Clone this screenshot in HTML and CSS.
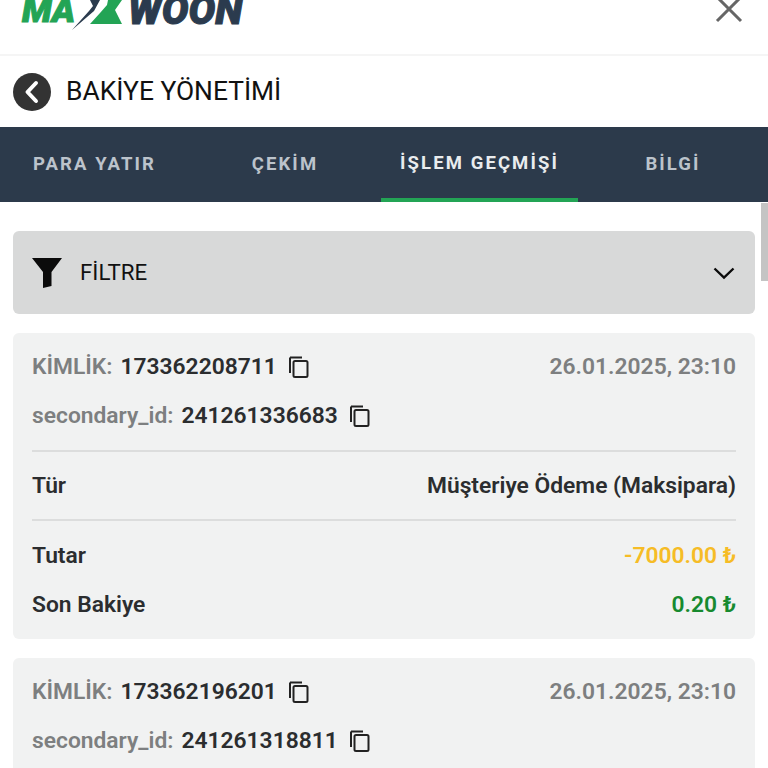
FILE: index.html
```html
<!DOCTYPE html>
<html lang="tr">
<head>
<meta charset="utf-8">
<title>Bakiye Yönetimi</title>
<link rel="stylesheet" href="styles.css">
</head>
<body>
<header class="topbar">
  <div class="logo">
    <span class="logo-ma">MA</span>
    <svg class="logo-x" viewBox="0 0 56 32" width="56" height="32"><polygon fill="#23a455" points="36,0 50,0 43,10 50,24 18,24 28,13 35,5"/><polygon fill="#2b3b4e" points="18,0 28,0 22,11 0,30 17,11 21,6"/></svg>
    <span class="logo-woon">WOON</span>
  </div>
  <svg class="close" viewBox="0 0 28 28" width="28" height="28"><path d="M2 -3 L26 21 M26 -3 L2 21" fill="none" stroke="#666" stroke-width="3"/></svg>
</header>
<div class="title-row">
  <span class="back"><svg viewBox="0 0 38 38" width="38" height="38"><path d="M23 10 L14.500 19 L23 28" fill="none" stroke="#fff" stroke-width="4" stroke-linecap="round" stroke-linejoin="round"/></svg></span>
  <h1 class="title">BAKİYE YÖNETİMİ</h1>
</div>
<nav class="tabs">
  <a class="tab">PARA YATIR</a>
  <a class="tab">ÇEKİM</a>
  <a class="tab tab-active">İŞLEM GEÇMİŞİ</a>
  <a class="tab">BİLGİ</a>
</nav>
<div class="scrollbar"></div>
<main class="content">
  <section class="filter">
    <svg class="funnel" viewBox="0 0 30 30" width="30" height="30"><path d="M0 0 H30 L19.500 14 V28 L11 30 V14 Z" fill="#0b0b0b"/></svg>
    <span class="filter-label">FİLTRE</span>
    <svg class="chevron" viewBox="0 0 24 14" width="24" height="14"><path d="M2.500 2.500 L12 11.500 L21.500 2.500" fill="none" stroke="#0b0b0b" stroke-width="2.400"/></svg>
  </section>

  <article class="card">
    <div class="row">
      <span class="id"><span class="muted">KİMLİK:</span> <b class="val">173362208711</b><svg class="copy" viewBox="0 0 24 24" width="24" height="24"><path d="M3 2.500 H15 M3 2.500 V18" fill="none" stroke="#222" stroke-width="2"/><rect x="6.500" y="6" width="14" height="16" rx="1.500" fill="none" stroke="#222" stroke-width="2"/></svg></span>
      <span class="muted">26.01.2025, 23:10</span>
    </div>
    <div class="row">
      <span class="id"><span class="muted">secondary_id:</span> <b class="val">241261336683</b><svg class="copy" viewBox="0 0 24 24" width="24" height="24"><path d="M3 2.500 H15 M3 2.500 V18" fill="none" stroke="#222" stroke-width="2"/><rect x="6.500" y="6" width="14" height="16" rx="1.500" fill="none" stroke="#222" stroke-width="2"/></svg></span>
    </div>
    <div class="type-row">
      <span class="val">Tür</span>
      <span class="val">Müşteriye Ödeme (Maksipara)</span>
    </div>
    <div class="row">
      <span class="val">Tutar</span>
      <span class="amount-out">-7000.00 ₺</span>
    </div>
    <div class="row">
      <span class="val">Son Bakiye</span>
      <span class="amount-in">0.20 ₺</span>
    </div>
  </article>

  <article class="card">
    <div class="row">
      <span class="id"><span class="muted">KİMLİK:</span> <b class="val">173362196201</b><svg class="copy" viewBox="0 0 24 24" width="24" height="24"><path d="M3 2.500 H15 M3 2.500 V18" fill="none" stroke="#222" stroke-width="2"/><rect x="6.500" y="6" width="14" height="16" rx="1.500" fill="none" stroke="#222" stroke-width="2"/></svg></span>
      <span class="muted">26.01.2025, 23:10</span>
    </div>
    <div class="row">
      <span class="id"><span class="muted">secondary_id:</span> <b class="val">241261318811</b><svg class="copy" viewBox="0 0 24 24" width="24" height="24"><path d="M3 2.500 H15 M3 2.500 V18" fill="none" stroke="#222" stroke-width="2"/><rect x="6.500" y="6" width="14" height="16" rx="1.500" fill="none" stroke="#222" stroke-width="2"/></svg></span>
    </div>
  </article>
</main>
</body>
</html>
```
FILE: styles.css
```css
html, body {
  margin: 0;
  height: 768px;
  overflow: hidden;
  background: #fff;
  font-family: Roboto, "Liberation Sans", sans-serif;
}
.topbar {
  height: 54px;
  border-bottom: 2px solid #f5f5f5;
  overflow: hidden;
  display: flex;
  justify-content: space-between;
  padding: 0 25px 0 22px;
}
.logo {
  display: flex;
  height: 32px;
  font-size: 40px;
  font-weight: 900;
  font-style: italic;
  line-height: 21px;
}
.logo span { height: 21px; }
.logo-ma { color: #23a455; -webkit-text-stroke: 1px #23a455; font-size: 35px; width: 55px; }
.logo-woon { color: #2b3b4e; -webkit-text-stroke: 1px #2b3b4e; }
.logo-x { flex: none; margin-left: -5px; }
.close { flex: none; }
.title-row {
  height: 71px;
  display: flex;
  align-items: center;
  gap: 15px;
  padding-left: 13px;
}
.back {
  width: 38px;
  height: 38px;
  border-radius: 50%;
  background: #333;
  display: flex;
}
.title {
  margin: 0 0 1px;
  font-size: 26.400px;
  font-weight: 400;
  color: #111;
}
.tabs {
  height: 75px;
  background: #2c3a4b;
  display: grid;
  grid-template-columns: 189px 192px 197px 190px;
}
.tab {
  display: flex;
  align-items: center;
  justify-content: center;
  padding-bottom: 2px;
  box-sizing: border-box;
  font-size: 18.500px;
  font-weight: 700;
  letter-spacing: 2.100px;
  color: #bcc3cb;
}
.tab-active {
  color: #e9ecee;
  border-bottom: 4px solid #23a455;
  padding-bottom: 0;
}
.scrollbar {
  position: absolute;
  top: 203px;
  right: 0;
  width: 7px;
  height: 78px;
  background: #c4c4c4;
}
.content {
  padding: 29px 13px 0;
  display: flex;
  flex-direction: column;
  gap: 19px;
}
.filter {
  height: 83px;
  border-radius: 6px;
  background: #d8d9d9;
  display: flex;
  align-items: center;
  padding: 0 19px;
}
.funnel { flex: none; }
.filter-label {
  margin: 0 0 2px 18px;
  font-size: 22.300px;
  color: #111;
  flex: 1;
}
.chevron { flex: none; }
.card {
  border-radius: 6px;
  background: #f1f2f2;
  padding: 9px 19px 10px;
  font-size: 22.800px;
  font-weight: 600;
}
.row {
  height: 49px;
  display: flex;
  align-items: center;
  justify-content: space-between;
}
.type-row {
  height: 71px;
  box-sizing: border-box;
  margin: 10px 0;
  border-top: 2px solid #dcdddd;
  border-bottom: 2px solid #dcdddd;
  display: flex;
  align-items: center;
  justify-content: space-between;
}
.id { display: flex; align-items: center; gap: 8px; white-space: pre; }
.muted { color: #7d7f80; }
.val { color: #2b2d2f; font-weight: 600; }
.copy { flex: none; margin-left: 2px; }
.amount-out { color: #f6bc26; }
.amount-in { color: #178a2f; }
```
